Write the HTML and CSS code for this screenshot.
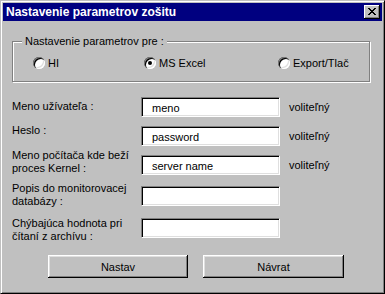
FILE: index.html
```html
<!DOCTYPE html>
<html>
<head>
<meta charset="utf-8">
<link rel="stylesheet" href="styles.css">
</head>
<body>
<div class="window">
  <div class="titlebar">
    <span class="title">Nastavenie parametrov zošitu</span>
    <div class="close">
      <svg width="8" height="7" viewBox="0 0 8 7" shape-rendering="crispEdges">
        <path d="M0 0h2v1h-2zM6 0h2v1h-2zM1 1h2v1h-2zM5 1h2v1h-2zM2 2h4v1h-4zM3 3h2v1h-2zM2 4h4v1h-4zM1 5h2v1h-2zM5 5h2v1h-2zM0 6h2v1h-2zM6 6h2v1h-2z" fill="#000"/>
      </svg>
    </div>
  </div>

  <div class="group">
    <span class="group-label">Nastavenie parametrov pre :</span>
    <div class="radios">
      <div class="opt"><span class="radio"></span><span>HI</span></div>
      <div class="opt"><span class="radio checked"></span><span>MS Excel</span></div>
      <div class="opt"><span class="radio"></span><span>Export/Tlač</span></div>
    </div>
  </div>

  <div class="form">
    <div class="label l1">Meno užívateľa :</div>
    <div class="field">meno</div>
    <div class="opt-text">voliteľný</div>

    <div class="label l2">Heslo :</div>
    <div class="field">password</div>
    <div class="opt-text">voliteľný</div>

    <div class="label l3">Meno počítača kde beží<br>proces Kernel :</div>
    <div class="field">server name</div>
    <div class="opt-text">voliteľný</div>

    <div class="label l4">Popis do monitorovacej<br>databázy :</div>
    <div class="field"></div>
    <div></div>

    <div class="label l5">Chýbajúca hodnota pri<br>čítaní z archívu :</div>
    <div class="field"></div>
    <div></div>
  </div>

  <div class="buttons">
    <div class="btn b1">Nastav</div>
    <div class="btn b2">Návrat</div>
  </div>
</div>
</body>
</html>
```

FILE: styles.css
```css
html, body {
  margin: 0;
  padding: 0;
  background: #c0c0c0;
}
body {
  font-family: "Liberation Sans", Arial, sans-serif;
  font-size: 11px;
  color: #000;
}
.window {
  width: 385px;
  height: 294px;
  box-sizing: border-box;
  background: #c0c0c0;
  border: 1px solid;
  border-color: #c0c0c0 #000 #000 #c0c0c0;
  box-shadow: inset 1px 1px #fff, inset -1px -1px #808080;
  padding: 2px;
}
.titlebar {
  height: 18px;
  background: #000080;
  display: flex;
  align-items: flex-start;
  justify-content: space-between;
}
.title {
  color: #fff;
  font-weight: bold;
  font-size: 12px;
  line-height: 18px;
  padding-left: 3px;
}
.close {
  width: 16px;
  height: 14px;
  box-sizing: border-box;
  margin-top: 2px;
  margin-right: 2px;
  background: #c0c0c0;
  box-shadow: inset -1px -1px #000, inset 1px 1px #fff, inset -2px -2px #808080;
  display: flex;
  align-items: center;
  justify-content: center;
  padding-right: 1px;
  padding-bottom: 1px;
}
.close svg { display: block; }

.group {
  position: relative;
  width: 356px;
  margin: 20px 0 0 9px;
  border: 1px solid #808080;
  box-shadow: inset 1px 1px #fff, 1px 1px #fff;
  padding: 15px 0 12px 0;
}
.group-label {
  position: absolute;
  left: 9px;
  top: -7px;
  padding: 0 3px;
  line-height: 13px;
  background: #c0c0c0;
}
.radios {
  display: grid;
  grid-template-columns: 111px 134px auto;
  padding-left: 20px;
  height: 12px;
}
.opt {
  display: flex;
  align-items: center;
  height: 12px;
  line-height: 12px;
  gap: 3px;
}
.radio {
  position: relative;
  width: 12px;
  height: 12px;
  border-radius: 50%;
  background: #fff;
  box-shadow: inset 1px 1px #808080, inset 2px 2px #000, inset -1px -1px #fff, inset -2px -2px #dfdfdf;
  flex: none;
}
.radio.checked::after {
  content: "";
  position: absolute;
  left: 4px;
  top: 4px;
  width: 4px;
  height: 4px;
  border-radius: 50%;
  background: #000;
}

.form {
  display: grid;
  grid-template-columns: 129px 139px auto;
  grid-template-rows: 29px 29px 31px 32px 20px;
  margin: 15px 0 0 9px;
  align-items: start;
}
.label {
  line-height: 13px;
}
.l1 { margin-top: 3px; }
.l2 { margin-top: -2px; }
.l3 { margin-top: -6px; }
.l4 { margin-top: -4px; }
.l5 { margin-top: -1px; }
.field {
  height: 20px;
  box-sizing: border-box;
  background: #fff;
  border: 1px solid;
  border-color: #808080 #fff #fff #808080;
  box-shadow: inset 1px 1px #000, inset -1px -1px #dfdfdf;
  padding-left: 10px;
  line-height: 19px;
  padding-top: 1px;
}
.opt-text {
  padding-left: 9px;
  line-height: 20px;
}

.buttons {
  display: flex;
  gap: 15px;
  margin: 17px 0 0 45px;
}
.btn {
  height: 23px;
  box-sizing: border-box;
  display: flex;
  align-items: center;
  justify-content: center;
  background: #c0c0c0;
  box-shadow: inset -1px -1px #000, inset 1px 1px #fff, inset -2px -2px #808080, inset 2px 2px #dfdfdf;
}
.b1 { width: 140px; }
.b2 { width: 141px; }
```
